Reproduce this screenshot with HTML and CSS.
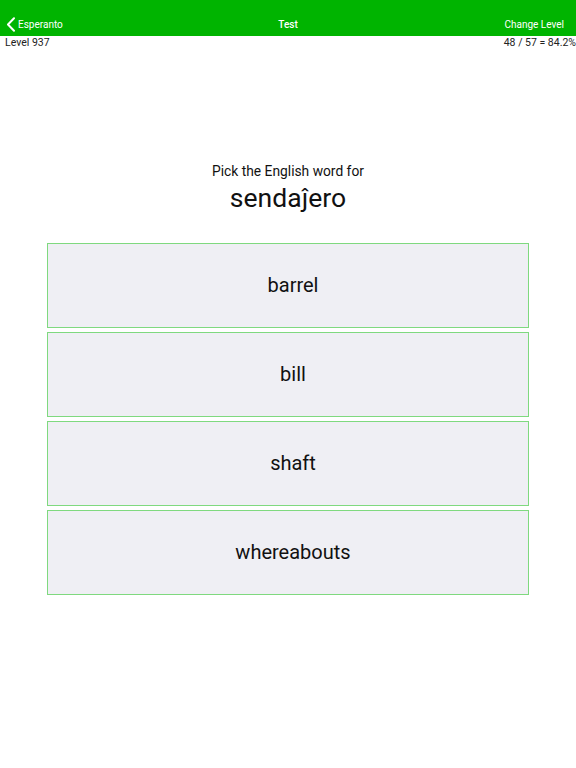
FILE: index.html
```html
<!DOCTYPE html>
<html>
<head>
<meta charset="utf-8">
<link rel="stylesheet" href="styles.css">
</head>
<body>
<header class="navbar">
  <div class="nav-left">
    <svg class="chevron" width="10" height="15" viewBox="0 0 10 15"><path d="M8 1.3 L2 7.5 L8 13.7" fill="none" stroke="#fff" stroke-width="2" stroke-linecap="round" stroke-linejoin="round"/></svg>
    <span>Esperanto</span>
  </div>
  <div class="nav-title">Test</div>
  <div class="nav-right">Change Level</div>
</header>
<div class="status">
  <span>Level 937</span>
  <span>48 / 57 = 84.2%</span>
</div>
<main class="quiz">
  <div class="prompt">Pick the English word for</div>
  <div class="word">sendaĵero</div>
  <div class="choices">
    <div class="choice">barrel</div>
    <div class="choice">bill</div>
    <div class="choice">shaft</div>
    <div class="choice">whereabouts</div>
  </div>
</main>
</body>
</html>
```
FILE: styles.css
```css
html, body {
  margin: 0;
  padding: 0;
  background: #ffffff;
  font-family: Roboto, "Noto Sans", "Liberation Sans", sans-serif;
  color: #111;
}
.navbar {
  height: 36px;
  background: #00b400;
  color: #fff;
  display: grid;
  grid-template-columns: 1fr auto 1fr;
  align-items: center;
  padding: 12px 0 0 0;
  box-sizing: border-box;
  font-size: 10px;
}
.nav-left {
  display: flex;
  align-items: center;
  gap: 2px;
  padding-left: 6px;
}
.chevron { display: block; }
.nav-title {
  font-weight: 500;
  text-align: center;
}
.nav-right {
  text-align: right;
  padding-right: 12px;
}
.status {
  display: flex;
  justify-content: space-between;
  font-size: 10.5px;
  line-height: 13px;
  padding: 0 0 0 5px;
  color: #222;
}
.quiz {
  display: flex;
  flex-direction: column;
  align-items: center;
  padding-top: 114px;
}
.prompt {
  font-size: 13.8px;
  line-height: 17px;
}
.word {
  font-size: 26.5px;
  line-height: 31px;
  margin-top: 2px;
}
.choices {
  margin-top: 30px;
  width: 482px;
  display: flex;
  flex-direction: column;
  gap: 4px;
}
.choice {
  height: 85px;
  box-sizing: border-box;
  border: 1px solid #7fd97f;
  background: #efeff4;
  display: flex;
  align-items: center;
  justify-content: center;
  padding: 0 0 1px 10px;
  font-size: 20px;
}
```
